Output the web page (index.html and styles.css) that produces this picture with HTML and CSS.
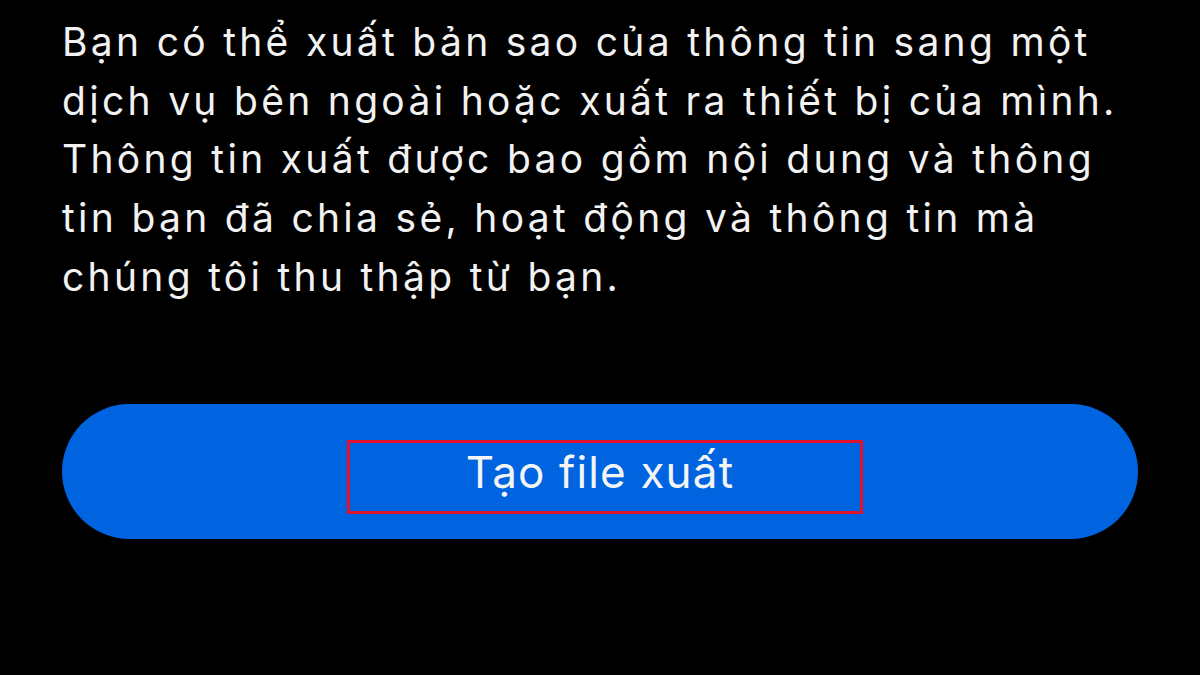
FILE: index.html
```html
<!DOCTYPE html>
<html lang="vi">
<head>
<meta charset="utf-8">
<link rel="stylesheet" href="styles.css">
</head>
<body>
<main class="screen">
  <p class="desc">Bạn có thể xuất bản sao của thông tin sang một dịch vụ bên ngoài hoặc xuất ra thiết bị của mình. Thông tin xuất được bao gồm nội dung và thông tin bạn đã chia sẻ, hoạt động và thông tin mà chúng tôi thu thập từ bạn.</p>
  <button class="cta"><span class="cta-label">Tạo file xuất</span></button>
</main>
</body>
</html>
```
FILE: styles.css
```css
html, body {
  margin: 0;
  padding: 0;
  background: #000;
}
.screen {
  width: 1200px;
  height: 675px;
  box-sizing: border-box;
  padding: 13px 62px 0 62px;
  display: flex;
  flex-direction: column;
  font-family: "Inter", "Noto Sans", sans-serif;
  color: #f2f2f2;
  overflow: hidden;
}
.desc {
  margin: 0;
  font-size: 39px;
  line-height: 58.7px;
  letter-spacing: 3.3px;
  width: 1070px;
}
.cta {
  margin-top: 97px;
  height: 135px;
  width: 1076px;
  flex: none;
  border: none;
  border-radius: 68px;
  background: #0064e0;
  display: flex;
  align-items: center;
  justify-content: center;
  padding: 0 0 0 9px;
  font-family: inherit;
  color: #f4f4f4;
}
.cta-label {
  box-sizing: border-box;
  width: 516px;
  height: 74px;
  margin-top: 12px;
  padding: 0 9px 11px 0;
  border: 3px solid #e0122c;
  display: flex;
  align-items: center;
  justify-content: center;
  font-size: 44px;
  letter-spacing: 1.15px;
  font-weight: 400;
}
```
